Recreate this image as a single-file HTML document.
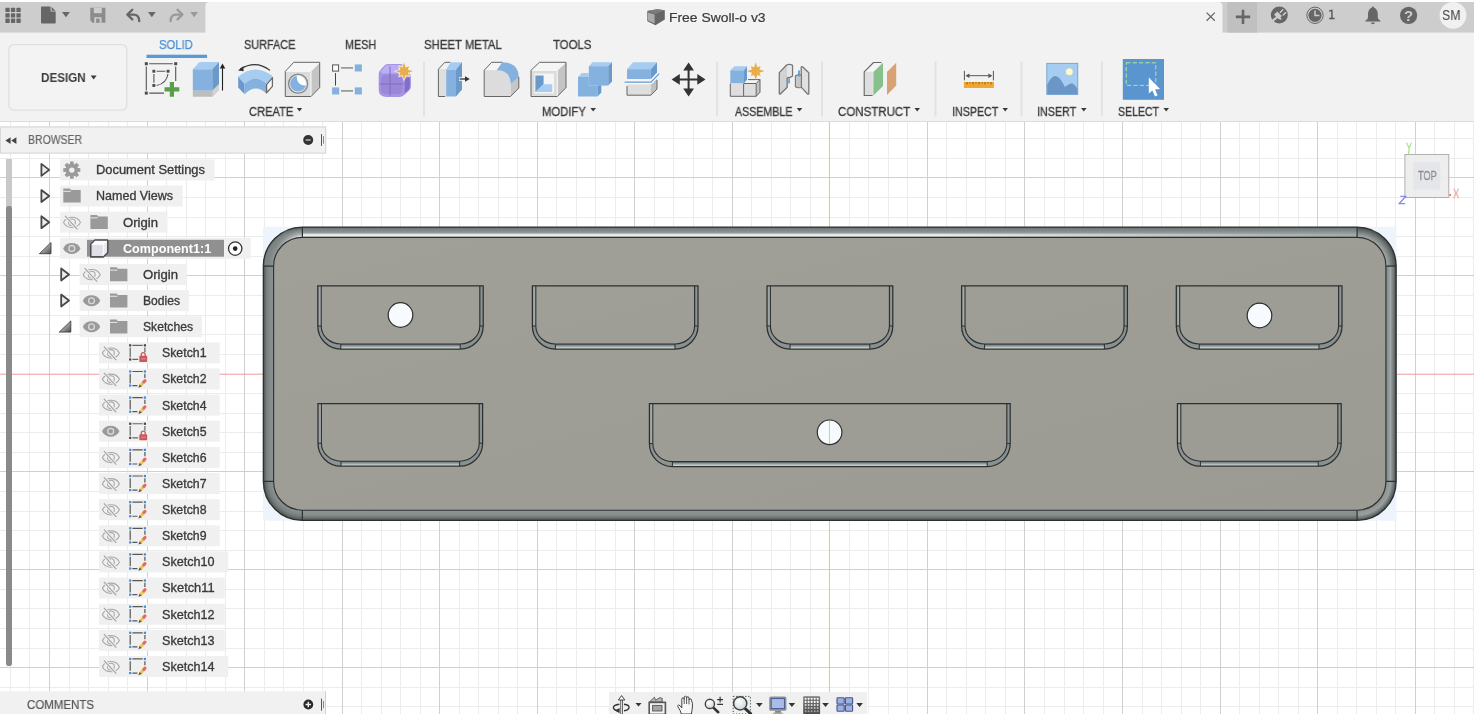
<!DOCTYPE html>
<html lang="en">
<head>
<meta charset="utf-8">
<title>Free Swoll-o v3</title>
<style>
*{box-sizing:border-box;margin:0;padding:0}
html,body{width:1474px;height:714px;overflow:hidden;background:#fff}
body{position:relative;font-family:"Liberation Sans",sans-serif;font-size:12px;color:#3c3c3c}
.abs{position:absolute}
#canvas{position:absolute;left:0;top:0;width:1474px;height:714px}
#topbar{position:absolute;left:0;top:2px;width:1474px;height:30px;background:#cdcdcd;z-index:2}
#activetab{position:absolute;left:205px;top:0;width:1018px;height:30px;background:#f2f2f2;border-radius:4px 4px 0 0}
#toolbar{z-index:1;position:absolute;left:0;top:32px;width:1474px;height:90px;background:#f2f2f2;border-bottom:1px solid #dcdcdc}
.t{position:absolute;white-space:nowrap;line-height:1;will-change:transform}
.tab{font-size:12px;color:#3c3c3c;top:7.2px;-webkit-text-stroke:.32px #3c3c3c}
.grp{font-size:12px;color:#3c3c3c;top:74.2px;-webkit-text-stroke:.32px #3c3c3c}
.sep{position:absolute;top:29.5px;width:2px;height:55px;background:#e2e2e2}
.ico{position:absolute;overflow:visible}
.row{position:absolute;background:#f0f0f0}
.tr{font-size:12px;color:#3a3a3a;-webkit-text-stroke:.32px #3a3a3a}
.lbl{position:absolute;font-size:12px;color:#3c3c3c;line-height:20px;top:0;white-space:nowrap}
</style>
</head>
<body>
<!-- CANVAS -->
<svg id="canvas" width="1474" height="714" viewBox="0 0 1474 714">
<path d="M10.5 122V714M29.5 122V714M69.5 122V714M88.5 122V714M108.5 122V714M127.5 122V714M166.5 122V714M186.5 122V714M205.5 122V714M225.5 122V714M264.5 122V714M283.5 122V714M303.5 122V714M322.5 122V714M361.5 122V714M381.5 122V714M400.5 122V714M420.5 122V714M459.5 122V714M478.5 122V714M498.5 122V714M517.5 122V714M556.5 122V714M576.5 122V714M595.5 122V714M615.5 122V714M654.5 122V714M673.5 122V714M693.5 122V714M712.5 122V714M751.5 122V714M771.5 122V714M790.5 122V714M810.5 122V714M849.5 122V714M868.5 122V714M888.5 122V714M907.5 122V714M946.5 122V714M966.5 122V714M985.5 122V714M1005.5 122V714M1044.5 122V714M1064.5 122V714M1083.5 122V714M1103.5 122V714M1142.5 122V714M1161.5 122V714M1181.5 122V714M1200.5 122V714M1239.5 122V714M1259.5 122V714M1278.5 122V714M1298.5 122V714M1337.5 122V714M1356.5 122V714M1376.5 122V714M1395.5 122V714M1434.5 122V714M1454.5 122V714M1473.5 122V714M0 138.5H1474M0 158.5H1474M0 197.5H1474M0 217.5H1474M0 236.5H1474M0 256.5H1474M0 295.5H1474M0 315.5H1474M0 334.5H1474M0 354.5H1474M0 393.5H1474M0 413.5H1474M0 432.5H1474M0 452.5H1474M0 491.5H1474M0 511.5H1474M0 530.5H1474M0 550.5H1474M0 589.5H1474M0 608.5H1474M0 628.5H1474M0 648.5H1474M0 687.5H1474M0 706.5H1474" stroke="#ececec" stroke-width="1" fill="none"/>
<path d="M49.5 122V714M147.5 122V714M244.5 122V714M342.5 122V714M439.5 122V714M537.5 122V714M634.5 122V714M732.5 122V714M927.5 122V714M1024.5 122V714M1122.5 122V714M1220.5 122V714M1317.5 122V714M1415.5 122V714M0 177.5H1474M0 275.5H1474M0 471.5H1474M0 569.5H1474M0 667.5H1474" stroke="#d0d0d0" stroke-width="1" fill="none"/>
<path d="M0 374.2H1474" stroke="#ee9a9a" stroke-width="1" fill="none"/>
<path d="M829.5 122V714" stroke="#a4ec80" stroke-width="1.1" fill="none"/>

<defs>
<linearGradient id="gTop" x1="0" y1="0" x2="0" y2="1"><stop offset="0" stop-color="#4a5050"/><stop offset="0.15" stop-color="#767e7e"/><stop offset="0.5" stop-color="#8a9292"/><stop offset="0.6" stop-color="#a0a8a8"/><stop offset="0.7" stop-color="#e2e6e8"/><stop offset="0.9" stop-color="#eef0f2"/><stop offset="1" stop-color="#8a9090"/></linearGradient>
<linearGradient id="gTopX" x1="0" y1="0" x2="1" y2="0"><stop offset="0" stop-color="#8a9292" stop-opacity="0"/><stop offset="0.6" stop-color="#8a9292" stop-opacity="0"/><stop offset="1" stop-color="#8a9292" stop-opacity=".75"/></linearGradient>
<linearGradient id="gBot" x1="0" y1="0" x2="0" y2="1"><stop offset="0" stop-color="#8e9492"/><stop offset="0.5" stop-color="#868c8a"/><stop offset="1" stop-color="#4e5454"/></linearGradient>
<linearGradient id="gLeft" x1="0" y1="0" x2="1" y2="0"><stop offset="0" stop-color="#555b5b"/><stop offset="0.4" stop-color="#7e8484"/><stop offset="1" stop-color="#8e9494"/></linearGradient>
<linearGradient id="gRight" x1="0" y1="0" x2="1" y2="0"><stop offset="0" stop-color="#7e8484"/><stop offset="0.45" stop-color="#a0a6a6"/><stop offset="1" stop-color="#4a5050"/></linearGradient>
<radialGradient id="gTL" gradientUnits="userSpaceOnUse" cx="302.4" cy="266.1" r="39.0"><stop offset="0.74" stop-color="#e0e4e4"/><stop offset="0.82" stop-color="#a8aeae"/><stop offset="0.92" stop-color="#7e8484"/><stop offset="1" stop-color="#555b5b"/></radialGradient>
<radialGradient id="gTR" gradientUnits="userSpaceOnUse" cx="1357.1" cy="266.1" r="39.0"><stop offset="0.74" stop-color="#a6acac"/><stop offset="0.86" stop-color="#7e8484"/><stop offset="1" stop-color="#464c4c"/></radialGradient>
<radialGradient id="gBL" gradientUnits="userSpaceOnUse" cx="302.4" cy="481.4" r="39.0"><stop offset="0.74" stop-color="#8e9494"/><stop offset="0.88" stop-color="#7a8080"/><stop offset="1" stop-color="#4e5454"/></radialGradient>
<radialGradient id="gBR" gradientUnits="userSpaceOnUse" cx="1357.1" cy="481.4" r="39.0"><stop offset="0.74" stop-color="#8a9090"/><stop offset="0.86" stop-color="#9aa0a0"/><stop offset="1" stop-color="#4a5050"/></radialGradient>
<linearGradient id="gTLo" gradientUnits="userSpaceOnUse" x1="263.4" y1="0" x2="302.4" y2="0"><stop offset="0" stop-color="#7c8282" stop-opacity=".9"/><stop offset="0.35" stop-color="#7c8282" stop-opacity=".75"/><stop offset="0.9" stop-color="#7c8282" stop-opacity="0"/></linearGradient>
<linearGradient id="gFace" x1="0" y1="0" x2="1" y2="1"><stop offset="0" stop-color="#a0a098"/><stop offset="1" stop-color="#9b9b93"/></linearGradient>
<linearGradient id="wL" x1="0" y1="0" x2="1" y2="0"><stop offset="0" stop-color="#8e9494"/><stop offset="1" stop-color="#b4baba"/></linearGradient>
<linearGradient id="wR" x1="0" y1="0" x2="1" y2="0"><stop offset="0" stop-color="#7e8484"/><stop offset="1" stop-color="#9aa0a0"/></linearGradient>
<linearGradient id="wB" x1="0" y1="0" x2="0" y2="1"><stop offset="0" stop-color="#5e6464"/><stop offset="0.4" stop-color="#929898"/><stop offset="0.75" stop-color="#c2caca"/><stop offset="1" stop-color="#d2dada"/></linearGradient>
</defs>
<rect x="263.0" y="226.79999999999998" width="1133.4999999999998" height="293.9" fill="#eef4fb"/>
<rect x="302.4" y="227.1" width="1054.6999999999998" height="10.2" fill="url(#gTop)"/>
<rect x="302.4" y="232.71" width="1054.6999999999998" height="4.59" fill="url(#gTopX)"/>
<rect x="302.4" y="510.2" width="1054.6999999999998" height="10.2" fill="url(#gBot)"/>
<rect x="263.4" y="266.1" width="10.2" height="215.29999999999995" fill="url(#gLeft)"/>
<rect x="1385.8999999999999" y="266.1" width="10.2" height="215.29999999999995" fill="url(#gRight)"/>
<path d="M263.4 266.1A39.0 39.0 0 0 1 302.4 227.10000000000002L302.4 237.3A28.8 28.8 0 0 0 273.59999999999997 266.1Z" fill="url(#gTL)"/>
<path d="M263.4 266.1A39.0 39.0 0 0 1 302.4 227.10000000000002L302.4 237.3A28.8 28.8 0 0 0 273.59999999999997 266.1Z" fill="url(#gTLo)"/>
<path d="M1396.1 266.1A39.0 39.0 0 0 0 1357.1 227.10000000000002L1357.1 237.3A28.8 28.8 0 0 1 1385.8999999999999 266.1Z" fill="url(#gTR)"/>
<path d="M263.4 481.4A39.0 39.0 0 0 0 302.4 520.4L302.4 510.2A28.8 28.8 0 0 1 273.59999999999997 481.4Z" fill="url(#gBL)"/>
<path d="M1396.1 481.4A39.0 39.0 0 0 1 1357.1 520.4L1357.1 510.2A28.8 28.8 0 0 0 1385.8999999999999 481.4Z" fill="url(#gBR)"/>
<rect x="273.59999999999997" y="237.29999999999998" width="1112.3" height="272.9" rx="28.8" ry="28.8" fill="url(#gFace)" stroke="#2b3030" stroke-width="1.15"/>
<rect x="263.4" y="227.1" width="1132.6999999999998" height="293.29999999999995" rx="39.0" ry="39.0" fill="none" stroke="#2b3030" stroke-width="1.4"/>
<path d="M302.4 227.1V237.29999999999998M302.4 510.2V520.4M1357.1 227.1V237.29999999999998M1357.1 510.2V520.4M263.4 266.1H273.59999999999997M1385.8999999999999 266.1H1396.1M263.4 481.4H273.59999999999997M1385.8999999999999 481.4H1396.1" stroke="#2b3030" stroke-width="1.2" fill="none"/>
<rect x="317.8" y="285.8" width="3.4" height="40.19999999999999" fill="url(#wL)"/>
<rect x="479.8" y="285.8" width="3.4" height="40.19999999999999" fill="url(#wR)"/>
<rect x="340.8" y="344.0" width="119.39999999999998" height="5.0" fill="url(#wB)"/>
<path d="M317.8 326.0A23.0 23.0 0 0 0 340.8 349.0V344.0A19.6 18.0 0 0 1 321.2 326.0Z" fill="#8e9494"/>
<path d="M483.2 326.0A23.0 23.0 0 0 1 460.2 349.0V344.0A19.6 18.0 0 0 0 479.8 326.0Z" fill="#8a9090"/>
<path d="M317.8 285.8H483.2V326.0A23.0 23.0 0 0 1 460.2 349.0H340.8A23.0 23.0 0 0 1 317.8 326.0Z" fill="none" stroke="#2b3030" stroke-width="1.25"/>
<path d="M321.2 285.8V326.0A19.6 18.0 0 0 0 340.8 344.0H460.2A19.6 18.0 0 0 0 479.8 326.0V285.8" fill="none" stroke="#2b3030" stroke-width="1.1"/>
<path d="M317.8 326.0H321.2M479.8 326.0H483.2M340.8 344.0V349.0M460.2 344.0V349.0" stroke="#2b3030" stroke-width="1" fill="none"/>
<rect x="532.4" y="285.8" width="3.4" height="40.19999999999999" fill="url(#wL)"/>
<rect x="694.6" y="285.8" width="3.4" height="40.19999999999999" fill="url(#wR)"/>
<rect x="555.4" y="344.0" width="119.60000000000002" height="5.0" fill="url(#wB)"/>
<path d="M532.4 326.0A23.0 23.0 0 0 0 555.4 349.0V344.0A19.6 18.0 0 0 1 535.8 326.0Z" fill="#8e9494"/>
<path d="M698.0 326.0A23.0 23.0 0 0 1 675.0 349.0V344.0A19.6 18.0 0 0 0 694.6 326.0Z" fill="#8a9090"/>
<path d="M532.4 285.8H698.0V326.0A23.0 23.0 0 0 1 675.0 349.0H555.4A23.0 23.0 0 0 1 532.4 326.0Z" fill="none" stroke="#2b3030" stroke-width="1.25"/>
<path d="M535.8 285.8V326.0A19.6 18.0 0 0 0 555.4 344.0H675.0A19.6 18.0 0 0 0 694.6 326.0V285.8" fill="none" stroke="#2b3030" stroke-width="1.1"/>
<path d="M532.4 326.0H535.8M694.6 326.0H698.0M555.4 344.0V349.0M675.0 344.0V349.0" stroke="#2b3030" stroke-width="1" fill="none"/>
<rect x="767.0" y="285.8" width="3.4" height="40.19999999999999" fill="url(#wL)"/>
<rect x="889.4" y="285.8" width="3.4" height="40.19999999999999" fill="url(#wR)"/>
<rect x="790.0" y="344.0" width="79.79999999999995" height="5.0" fill="url(#wB)"/>
<path d="M767.0 326.0A23.0 23.0 0 0 0 790.0 349.0V344.0A19.6 18.0 0 0 1 770.4 326.0Z" fill="#8e9494"/>
<path d="M892.8 326.0A23.0 23.0 0 0 1 869.8 349.0V344.0A19.6 18.0 0 0 0 889.4 326.0Z" fill="#8a9090"/>
<path d="M767.0 285.8H892.8V326.0A23.0 23.0 0 0 1 869.8 349.0H790.0A23.0 23.0 0 0 1 767.0 326.0Z" fill="none" stroke="#2b3030" stroke-width="1.25"/>
<path d="M770.4 285.8V326.0A19.6 18.0 0 0 0 790.0 344.0H869.8A19.6 18.0 0 0 0 889.4 326.0V285.8" fill="none" stroke="#2b3030" stroke-width="1.1"/>
<path d="M767.0 326.0H770.4M889.4 326.0H892.8M790.0 344.0V349.0M869.8 344.0V349.0" stroke="#2b3030" stroke-width="1" fill="none"/>
<rect x="961.6" y="285.8" width="3.4" height="40.19999999999999" fill="url(#wL)"/>
<rect x="1124.0" y="285.8" width="3.4" height="40.19999999999999" fill="url(#wR)"/>
<rect x="984.6" y="344.0" width="119.80000000000007" height="5.0" fill="url(#wB)"/>
<path d="M961.6 326.0A23.0 23.0 0 0 0 984.6 349.0V344.0A19.6 18.0 0 0 1 965.0 326.0Z" fill="#8e9494"/>
<path d="M1127.4 326.0A23.0 23.0 0 0 1 1104.4 349.0V344.0A19.6 18.0 0 0 0 1124.0 326.0Z" fill="#8a9090"/>
<path d="M961.6 285.8H1127.4V326.0A23.0 23.0 0 0 1 1104.4 349.0H984.6A23.0 23.0 0 0 1 961.6 326.0Z" fill="none" stroke="#2b3030" stroke-width="1.25"/>
<path d="M965.0 285.8V326.0A19.6 18.0 0 0 0 984.6 344.0H1104.4A19.6 18.0 0 0 0 1124.0 326.0V285.8" fill="none" stroke="#2b3030" stroke-width="1.1"/>
<path d="M961.6 326.0H965.0M1124.0 326.0H1127.4M984.6 344.0V349.0M1104.4 344.0V349.0" stroke="#2b3030" stroke-width="1" fill="none"/>
<rect x="1176.3" y="285.8" width="3.4" height="40.19999999999999" fill="url(#wL)"/>
<rect x="1338.6" y="285.8" width="3.4" height="40.19999999999999" fill="url(#wR)"/>
<rect x="1199.3" y="344.0" width="119.70000000000005" height="5.0" fill="url(#wB)"/>
<path d="M1176.3 326.0A23.0 23.0 0 0 0 1199.3 349.0V344.0A19.6 18.0 0 0 1 1179.7 326.0Z" fill="#8e9494"/>
<path d="M1342.0 326.0A23.0 23.0 0 0 1 1319.0 349.0V344.0A19.6 18.0 0 0 0 1338.6 326.0Z" fill="#8a9090"/>
<path d="M1176.3 285.8H1342.0V326.0A23.0 23.0 0 0 1 1319.0 349.0H1199.3A23.0 23.0 0 0 1 1176.3 326.0Z" fill="none" stroke="#2b3030" stroke-width="1.25"/>
<path d="M1179.7 285.8V326.0A19.6 18.0 0 0 0 1199.3 344.0H1319.0A19.6 18.0 0 0 0 1338.6 326.0V285.8" fill="none" stroke="#2b3030" stroke-width="1.1"/>
<path d="M1176.3 326.0H1179.7M1338.6 326.0H1342.0M1199.3 344.0V349.0M1319.0 344.0V349.0" stroke="#2b3030" stroke-width="1" fill="none"/>
<rect x="318.0" y="403.5" width="3.4" height="39.69999999999999" fill="url(#wL)"/>
<rect x="479.20000000000005" y="403.5" width="3.4" height="39.69999999999999" fill="url(#wR)"/>
<rect x="341.0" y="461.2" width="118.60000000000002" height="5.0" fill="url(#wB)"/>
<path d="M318.0 443.2A23.0 23.0 0 0 0 341.0 466.2V461.2A19.6 18.0 0 0 1 321.4 443.2Z" fill="#8e9494"/>
<path d="M482.6 443.2A23.0 23.0 0 0 1 459.6 466.2V461.2A19.6 18.0 0 0 0 479.20000000000005 443.2Z" fill="#8a9090"/>
<path d="M318.0 403.5H482.6V443.2A23.0 23.0 0 0 1 459.6 466.2H341.0A23.0 23.0 0 0 1 318.0 443.2Z" fill="none" stroke="#2b3030" stroke-width="1.25"/>
<path d="M321.4 403.5V443.2A19.6 18.0 0 0 0 341.0 461.2H459.6A19.6 18.0 0 0 0 479.20000000000005 443.2V403.5" fill="none" stroke="#2b3030" stroke-width="1.1"/>
<path d="M318.0 443.2H321.4M479.20000000000005 443.2H482.6M341.0 461.2V466.2M459.6 461.2V466.2" stroke="#2b3030" stroke-width="1" fill="none"/>
<rect x="649.4" y="403.5" width="3.4" height="40.10000000000002" fill="url(#wL)"/>
<rect x="1006.8000000000001" y="403.5" width="3.4" height="40.10000000000002" fill="url(#wR)"/>
<rect x="672.4" y="461.6" width="314.80000000000007" height="5.0" fill="url(#wB)"/>
<path d="M649.4 443.6A23.0 23.0 0 0 0 672.4 466.6V461.6A19.6 18.0 0 0 1 652.8 443.6Z" fill="#8e9494"/>
<path d="M1010.2 443.6A23.0 23.0 0 0 1 987.2 466.6V461.6A19.6 18.0 0 0 0 1006.8000000000001 443.6Z" fill="#8a9090"/>
<path d="M649.4 403.5H1010.2V443.6A23.0 23.0 0 0 1 987.2 466.6H672.4A23.0 23.0 0 0 1 649.4 443.6Z" fill="none" stroke="#2b3030" stroke-width="1.25"/>
<path d="M652.8 403.5V443.6A19.6 18.0 0 0 0 672.4 461.6H987.2A19.6 18.0 0 0 0 1006.8000000000001 443.6V403.5" fill="none" stroke="#2b3030" stroke-width="1.1"/>
<path d="M649.4 443.6H652.8M1006.8000000000001 443.6H1010.2M672.4 461.6V466.6M987.2 461.6V466.6" stroke="#2b3030" stroke-width="1" fill="none"/>
<rect x="1177.4" y="403.5" width="3.4" height="39.69999999999999" fill="url(#wL)"/>
<rect x="1337.8" y="403.5" width="3.4" height="39.69999999999999" fill="url(#wR)"/>
<rect x="1200.4" y="461.2" width="117.79999999999995" height="5.0" fill="url(#wB)"/>
<path d="M1177.4 443.2A23.0 23.0 0 0 0 1200.4 466.2V461.2A19.6 18.0 0 0 1 1180.8000000000002 443.2Z" fill="#8e9494"/>
<path d="M1341.2 443.2A23.0 23.0 0 0 1 1318.2 466.2V461.2A19.6 18.0 0 0 0 1337.8 443.2Z" fill="#8a9090"/>
<path d="M1177.4 403.5H1341.2V443.2A23.0 23.0 0 0 1 1318.2 466.2H1200.4A23.0 23.0 0 0 1 1177.4 443.2Z" fill="none" stroke="#2b3030" stroke-width="1.25"/>
<path d="M1180.8000000000002 403.5V443.2A19.6 18.0 0 0 0 1200.4 461.2H1318.2A19.6 18.0 0 0 0 1337.8 443.2V403.5" fill="none" stroke="#2b3030" stroke-width="1.1"/>
<path d="M1177.4 443.2H1180.8000000000002M1337.8 443.2H1341.2M1200.4 461.2V466.2M1318.2 461.2V466.2" stroke="#2b3030" stroke-width="1" fill="none"/>
<circle cx="400.5" cy="315.0" r="12.3" fill="#f8fbfe" stroke="#2b3030" stroke-width="1.2"/>
<circle cx="1259.5" cy="315.5" r="12.3" fill="#f8fbfe" stroke="#2b3030" stroke-width="1.2"/>
<circle cx="829.6" cy="432.3" r="12.3" fill="#f8fbfe" stroke="#2b3030" stroke-width="1.2"/>
<path d="M829.5 421V444" stroke="#a4ec80" stroke-width="1.1"/>

<g>
<rect x="1404.9" y="154.5" width="43.9" height="43" fill="#ededee" fill-opacity=".92" stroke="#a8a8a8" stroke-width=".9"/>
<rect x="1413.2" y="162.4" width="27" height="27" fill="#e3e4e9" fill-opacity=".9"/>
<path d="M1408.6 154.4V151.6" stroke="#9be07a" stroke-width="1" fill="none"/>
<circle cx="1450.2" cy="195" r=".9" fill="#e05050"/>
</g>

</svg>

<!-- TOP BAR -->
<div id="topbar">
<svg class="abs" style="left:0;top:-2px" width="1474" height="34" viewBox="0 0 1474 34">
<rect x="0" y="2" width="1474" height="30.6" fill="#cdcdcd"/><path d="M205.4 34V6Q205.4 2 209.4 2H1218.5Q1222.5 2 1222.5 6V34Z" fill="#f2f2f2"/><rect x="1227.3" y="2" width="29.7" height="30.6" fill="#c0c0c0"/>
<!-- app grid -->
<g fill="#666">
<rect x="5.4" y="7.8" width="4.3" height="4.3" rx=".6"/><rect x="10.9" y="7.8" width="4.3" height="4.3" rx=".6"/><rect x="16.4" y="7.8" width="4.3" height="4.3" rx=".6"/>
<rect x="5.4" y="13.2" width="4.3" height="4.3" rx=".6"/><rect x="10.9" y="13.2" width="4.3" height="4.3" rx=".6"/><rect x="16.4" y="13.2" width="4.3" height="4.3" rx=".6"/>
<rect x="5.4" y="18.6" width="4.3" height="4.3" rx=".6"/><rect x="10.9" y="18.6" width="4.3" height="4.3" rx=".6"/><rect x="16.4" y="18.6" width="4.3" height="4.3" rx=".6"/>
</g>
<!-- file -->
<path d="M42 6.6H50.6V11.6H55.7V22.6Q55.7 23.6 54.7 23.6H42Q41 23.6 41 22.6V7.6Q41 6.6 42 6.6ZM51.6 6.9L55.5 10.7H51.6Z" fill="#666"/>
<path d="M62 12.1H69.9L65.95 17.2Z" fill="#666"/>
<!-- save -->
<path d="M90.3 7.8H105.4V22.8H92.6L90.3 20.6Z" fill="#8c8c8c"/>
<rect x="93.8" y="7.8" width="8" height="5.4" fill="#cdcdcd"/><rect x="94.3" y="17.2" width="7.2" height="5.6" fill="#cdcdcd"/><rect x="96.2" y="18.6" width="3.4" height="4.2" fill="#8c8c8c"/>
<!-- undo -->
<path d="M132.3 9.8L127.4 14.6L132.3 19.4" fill="none" stroke="#666" stroke-width="2.3" stroke-linecap="round" stroke-linejoin="round"/>
<path d="M127.8 14.6H133.5Q139.2 14.6 139.2 21.2" fill="none" stroke="#666" stroke-width="2.3" stroke-linecap="round"/>
<path d="M148 12.1H155.7L151.85 17.2Z" fill="#666"/>
<!-- redo -->
<path d="M177.5 9.8L182.4 14.6L177.5 19.4" fill="none" stroke="#999" stroke-width="2.3" stroke-linecap="round" stroke-linejoin="round"/>
<path d="M182 14.6H176.3Q170.6 14.6 170.6 21.2" fill="none" stroke="#999" stroke-width="2.3" stroke-linecap="round"/>
<path d="M190.3 12.1H198L194.15 17.2Z" fill="#999"/>
<!-- doc icon -->
<path d="M647.3 11L657 9.3L664.8 10.3V19.6L655.5 25.3L647.3 21.2Z" fill="#666"/>
<path d="M647.3 11L657 9.3L664.8 10.3L655 13.9Z" fill="#7c7c7c"/>
<path d="M648 12.4L654.6 14.6V23.6L648 20.6Z" fill="#ababab"/>
<!-- close x -->
<path d="M1206.6 12.6L1214.8 20.8M1214.8 12.6L1206.6 20.8" stroke="#666" stroke-width="1.3" fill="none"/>
<!-- plus -->
<path d="M1243 9.8V24M1235.8 16.9H1250.2" stroke="#666" stroke-width="2.6" fill="none"/>
<!-- extensions/job status -->
<circle cx="1279.3" cy="15" r="8.5" fill="#666"/>
<g stroke="#cdcdcd" fill="none" stroke-linecap="round">
<path d="M1271.6 22.4Q1273.4 19.4 1276.2 18" stroke-width="2.2"/>
<path d="M1276.4 17L1279.6 13.8" stroke-width="6.4" stroke-linecap="butt"/>
<path d="M1275.2 13.6L1281 19.4" stroke-width="2" stroke-linecap="butt"/>
<path d="M1280.4 12.2L1282.8 9.8M1283.2 15L1285.6 12.6" stroke-width="1.5"/>
</g>
<!-- clock -->
<circle cx="1315" cy="15.3" r="8.2" fill="none" stroke="#666" stroke-width="1"/>
<circle cx="1315" cy="15.3" r="6.6" fill="#666"/>
<path d="M1315 10.6V15.6H1319.4" stroke="#cdcdcd" stroke-width="1.5" fill="none"/>
<!-- bell -->
<path d="M1372.9 6.4Q1374 6.4 1374 7.8Q1377.6 9 1377.8 14V17.6Q1378 19.4 1380.4 20.8V21.6H1365.4V20.8Q1367.8 19.4 1368 17.6V14Q1368.2 9 1371.8 7.8Q1371.8 6.4 1372.9 6.4Z" fill="#666"/>
<path d="M1370.8 22.6H1375Q1374.8 24.3 1372.9 24.3Q1371 24.3 1370.8 22.6Z" fill="#666"/>
<!-- help -->
<circle cx="1408.6" cy="15.3" r="8.6" fill="#666"/>
<!-- avatar -->
<circle cx="1453" cy="15.3" r="13.4" fill="#f0f0f0"/>
</svg>
<div class="t" id="doctitle" style="left:669.2px;top:9.3px;font-size:13px;color:#3a3a3a;-webkit-text-stroke:.2px #3a3a3a;transform:scaleX(1.0696);transform-origin:0 0">Free Swoll-o v3</div>
<div class="t" id="t_one" style="left:1327.6px;top:8.3px;font-size:11.6px;color:#555;-webkit-text-stroke:.3px #555;font-family:'DejaVu Sans',sans-serif">1</div>
<div class="t" style="left:1404.1px;top:6.3px;font-size:15px;font-weight:bold;color:#cdcdcd">?</div>
<div class="t" id="sm" style="left:1441.8px;top:7.1px;font-size:13.8px;color:#444;transform:scaleX(0.8936);transform-origin:0 0">SM</div>

</div>

<!-- TOOLBAR -->
<div id="toolbar">
<svg class="abs" style="left:0;top:0" width="1474" height="89" viewBox="0 32 1474 89">
<rect x="9" y="44.6" width="117.8" height="65.5" rx="5" fill="#f3f3f3" stroke="#e0e0e0" stroke-width="1.4"/>
<rect x="146.5" y="54.7" width="60.6" height="3.3" fill="#5b9bd5"/>
<g fill="#3a3a3a">
<path d="M90.6 75.6H96.6L93.6 79.4Z"/>
<path d="M296.8 107.9H302.2L299.5 111.4Z"/><path d="M590.4 107.9H596L593.2 111.4Z"/><path d="M796.8 107.9H802.3L799.5 111.4Z"/><path d="M914.5 107.9H920L917.2 111.4Z"/><path d="M1002.5 107.9H1008L1005.2 111.4Z"/><path d="M1081 107.9H1086.6L1083.8 111.4Z"/><path d="M1163.5 107.9H1169L1166.2 111.4Z"/>
</g>
<rect x="423.0" y="61.5" width="2" height="55" fill="#e2e2e2"/><rect x="716.1" y="61.5" width="2" height="55" fill="#e2e2e2"/><rect x="821.0" y="61.5" width="2" height="55" fill="#e2e2e2"/><rect x="934.5" y="61.5" width="2" height="55" fill="#e2e2e2"/><rect x="1020.5" y="61.5" width="2" height="55" fill="#e2e2e2"/><rect x="1100.9" y="61.5" width="2" height="55" fill="#e2e2e2"/>
<!-- 1 sketch -->
<g fill="#4a4a4a">
<rect x="144.8" y="62.2" width="3" height="3"/><rect x="174.2" y="62.2" width="3" height="3"/><rect x="144.8" y="91.6" width="3" height="3"/>
<rect x="152.4" y="69.8" width="2.9" height="2.9"/><rect x="166.6" y="69.8" width="2.9" height="2.9"/><rect x="152.4" y="84" width="2.9" height="2.9"/>
</g>
<path d="M149.2 63.7H172.8M146.3 66.5V90.4M175.7 66.5V81M149.2 93.1H164" stroke="#555" stroke-width="1.1" fill="none"/>
<path d="M156.6 71.3H165.4M153.9 74V82.8" stroke="#555" stroke-width="1.1" fill="none"/>
<path d="M168 74Q166.5 83.5 156.6 85.5" stroke="#555" stroke-width="1.1" fill="none"/>
<path d="M171.9 82V96.7M164.5 89.35H179.3" stroke="#5a9e4b" stroke-width="4.2" fill="none"/>
<!-- 2 extrude -->
<path d="M192.8 90.6H212.3L219 84V90L212.3 96.7H192.8Z" fill="#bdbdbd"/>
<path d="M212.3 90.6L219 84V90L212.3 96.7Z" fill="#d2d2d2"/>
<rect x="192.8" y="69.2" width="19.5" height="21.4" fill="#85b1de"/>
<path d="M192.8 69.2L199.5 62H219L212.3 69.2Z" fill="#a6ccf2"/>
<path d="M212.3 69.2L219 62V84L212.3 90.6Z" fill="#6a9acb"/>
<path d="M222.5 66V90.6" stroke="#222" stroke-width="1.1"/><path d="M222.5 63.4L225.3 68.4H219.7Z" fill="#222"/>
<!-- 3 revolve -->
<path d="M238.2 76.8Q255 62.5 272.6 76L266.6 84Q255.5 73 244.6 84Z" fill="#a6ccf2"/>
<path d="M238.2 76.8L244.6 84V94.2L238.2 87.6Z" fill="#6a9acb"/>
<path d="M244.6 84Q255.5 73 266.6 84V93.8Q255.5 83 244.6 94.2Z" fill="#85b1de"/>
<path d="M266.6 84.6L272.4 77.6V86.4L266.6 92.8Z" fill="#fff" stroke="#6a6a6a" stroke-width="1.3" stroke-linejoin="round"/>
<path d="M270 70.4Q256 59.5 240.2 69" stroke="#333" stroke-width="1.1" fill="none"/><path d="M238 70.6L243.4 66.2L243.6 71.2Z" fill="#333"/>
<!-- 4 hole -->
<path d="M285.3 71.3L293.8 62.3H319.7L311 71.3Z" fill="#f5f5f5"/>
<path d="M311 71.3L319.7 62.3V87.6L311 96.5Z" fill="#c4c4c4"/>
<rect x="285.3" y="71.3" width="25.7" height="25.2" fill="#dcdcdc"/>
<path d="M285.3 71.3H311V96.5M311 71.3L319.7 62.3" fill="none" stroke="#f8f8f8" stroke-width="1"/><path d="M285.3 71.3L293.8 62.3H319.7V87.6L311 96.5H285.3Z" fill="none" stroke="#666" stroke-width="1" stroke-linejoin="round"/>
<circle cx="298.1" cy="83.7" r="9.5" fill="#e6e6e6" stroke="#868686" stroke-width="1.3"/>
<circle cx="298.1" cy="83.7" r="7.9" fill="#85b1de"/>
<clipPath id="hc"><circle cx="298.1" cy="83.7" r="7.9"/></clipPath><circle cx="304.8" cy="77.6" r="8" fill="#fff" clip-path="url(#hc)"/>
<!-- 5 pattern -->
<path d="M341 67.9H353M341 90.9H353" stroke="#999" stroke-width="1.6"/>
<path d="M335.5 73V85.6" stroke="#444" stroke-width="1"/>
<rect x="332.6" y="64.9" width="6" height="6.2" fill="#fafafa" stroke="#555" stroke-width="1"/>
<rect x="354.8" y="64.4" width="7.1" height="7.1" fill="#85b1de"/><rect x="332.1" y="87.4" width="7.1" height="7.1" fill="#85b1de"/><rect x="354.8" y="87.4" width="7.1" height="7.1" fill="#85b1de"/>
<!-- 6 form -->
<path d="M387.4 64H400Q404 64 406 66.6L409.4 72.6Q410.9 75.6 410.9 78.6V86.4Q410.9 88.6 409.2 90.4L404.2 95Q402.2 96.9 399 96.9H386Q378.7 96.9 378.7 89.6V74.6Q378.7 71.6 380.8 69.6L384.4 65.6Q385.8 64 387.4 64Z" fill="#a595e2"/>
<path d="M387.6 65H399.6Q403.4 65 405 67.4L407 72.4Q404 73.4 400 73.4H384Q381.6 73.4 380.4 72L384.8 66.6Q386 65 387.6 65Z" fill="#bcaef2"/>
<path d="M404.6 79.4L409.8 75.6V86.6Q409.8 88.2 408.6 89.6L404.6 93.2Z" fill="#826ec6"/>
<rect x="380.9" y="74.5" width="21.4" height="19.6" rx="4.6" fill="#9a87d8"/>
<path d="M390 66.4V95.6M379.6 84H403.4" stroke="#7f6cc4" stroke-width="1" fill="none"/>
<path d="M404.10 61.10L406.17 66.31L410.04 65.36L409.09 69.23L414.30 71.30L409.09 73.37L410.04 77.24L406.17 76.29L404.10 81.50L402.03 76.29L398.16 77.24L399.11 73.37L393.90 71.30L399.11 69.23L398.16 65.36L402.03 66.31Z" fill="#f4f1ea"/>
<path d="M404.10 62.50L405.67 67.51L409.05 66.35L407.89 69.73L412.90 71.30L407.89 72.87L409.05 76.25L405.67 75.09L404.10 80.10L402.53 75.09L399.15 76.25L400.31 72.87L395.30 71.30L400.31 69.73L399.15 66.35L402.53 67.51Z" fill="#e8ae4c"/>
<!-- 7 press pull -->
<path d="M438.4 69.2L444.8 62.3H450.4L446.2 69.2Z" fill="#f2f2f2"/>
<rect x="438.4" y="69.2" width="7.8" height="27.3" fill="#dedede"/>
<path d="M450.4 62.3H444.8L438.4 69.2V96.5H445.2" fill="none" stroke="#666" stroke-width="1"/>
<rect x="446.2" y="69.4" width="9.8" height="27.1" fill="#85b1de"/>
<path d="M446.2 69.4L450.6 62.3H462L456 69.4Z" fill="#a6ccf2"/>
<path d="M456 69.4L462 62.3V89.6L456 96.5Z" fill="#6a9acb"/>
<path d="M459 79H468" stroke="#f2f2f2" stroke-width="3.6"/><path d="M459.6 79H466" stroke="#333" stroke-width="1.3"/><path d="M469.8 79L465 76.2V81.8Z" fill="#333"/>
<!-- 8 fillet -->
<path d="M484.2 70.3L491.7 62.3H502.3L497 70.3Z" fill="#f5f5f5"/>
<path d="M510.5 84L518.8 77V88L510.5 96.5Z" fill="#c6c6c6"/>
<path d="M484.2 70.3H497Q510.5 70.3 510.5 84V96.5H484.2Z" fill="#dcdcdc"/>
<path d="M502.3 62.3Q518.8 62.6 518.8 77L510.6 84Q510.5 70.3 496.6 70.3Z" fill="#85b1de"/>
<path d="M502.3 62.3H491.7L484.2 70.3V96.5H510.5L518.8 88V77" fill="none" stroke="#666" stroke-width="1" stroke-linejoin="round"/>
<!-- 9 shell -->
<path d="M531 70.3L539.5 62.3H566L557.3 70.3Z" fill="#f5f5f5"/>
<path d="M557.3 70.3L566 62.3V87.6L557.3 96.5Z" fill="#c4c4c4"/>
<rect x="531" y="70.3" width="26.3" height="26.2" fill="#dcdcdc"/>
<rect x="534.4" y="73.6" width="19.6" height="19.8" fill="#f5f5f5"/>
<path d="M535.4 75.4H543.6V84.3L535.4 92Z" fill="#6a9acb"/>
<path d="M543.6 84.3H552.2V92H535.4Z" fill="#a6ccf2"/>
<path d="M531 70.3H557.3V96.5M557.3 70.3L566 62.3" fill="none" stroke="#f8f8f8" stroke-width="1"/><path d="M531 70.3L539.5 62.3H566V87.6L557.3 96.5H531Z" fill="none" stroke="#666" stroke-width="1" stroke-linejoin="round"/>
<!-- 10 combine -->
<path d="M588.8 66.2L592.6 62.3H612L608.2 66.2Z" fill="#a6ccf2"/><path d="M608.2 66.2L612 62.3V81.6L608.2 85.5Z" fill="#6a9acb"/><rect x="588.8" y="66.2" width="19.4" height="19.4" fill="#85b1de"/>
<path d="M578 76.9L581.8 73H588.8V76.9Z" fill="#a6ccf2"/>
<path d="M578 76.9H588.8V85.5H597.5V96.5H578Z" fill="#85b1de"/>
<path d="M597.5 85.5H601.3V92.6L597.5 96.5Z" fill="#6a9acb"/>
<!-- 11 split -->
<path d="M627 69.2L633 62.3H657L650.9 69.2Z" fill="#a6ccf2"/><path d="M650.9 69.2L657 62.3V72.6L650.9 79Z" fill="#6a9acb"/><rect x="627" y="69.2" width="23.9" height="9.8" fill="#85b1de"/>
<rect x="627" y="84.6" width="23.9" height="10.6" fill="#dedede"/><path d="M650.9 84.6L657 78.6V89L650.9 95.2Z" fill="#c0c0c0"/>
<path d="M627 86V95.2H650.9L657 89V80" fill="none" stroke="#666" stroke-width="1"/>
<path d="M624.6 82.2H651L659.2 73.6" fill="none" stroke="#fafafa" stroke-width="3.6"/>
<path d="M624.6 82.2H651L659.2 73.6" fill="none" stroke="#5b9bd5" stroke-width="1.3"/>
<!-- 12 move -->
<path d="M688.6 68V91M677 79.4H700" stroke="#333" stroke-width="2" fill="none"/>
<path d="M688.6 62.4L694 70.6H683.2ZM688.6 96.6L694 88.4H683.2ZM671.6 79.4L679.8 74V84.8ZM705.5 79.4L697.3 74V84.8Z" fill="#333"/>
<!-- 13 new component -->
<path d="M730.3 70.3L734.5 66.3H747L744 70.3Z" fill="#a6ccf2"/><path d="M744 70.3L747 66.3V79.4L744 83.5Z" fill="#6a9acb"/><rect x="730.3" y="70.3" width="13.7" height="13.2" fill="#85b1de"/>
<path d="M744 83.5L748 79.6H760L756.2 83.5Z" fill="#f5f5f5"/><path d="M756.2 83.5L760 79.6V92.2L756.2 96.3Z" fill="#c4c4c4"/>
<rect x="730.3" y="83.5" width="25.9" height="12.8" fill="#dedede"/>
<path d="M730.3 83.5V96.3H756.2L760 92.2V79.6H748M743.6 83.5V96.3M744 83.5H756.2V96.3M756.2 83.5L760 79.6" fill="none" stroke="#666" stroke-width="1" stroke-linejoin="round"/>
<path d="M755.70 62.30L757.27 67.31L760.65 66.15L759.49 69.53L764.50 71.10L759.49 72.67L760.65 76.05L757.27 74.89L755.70 79.90L754.13 74.89L750.75 76.05L751.91 72.67L746.90 71.10L751.91 69.53L750.75 66.15L754.13 67.31Z" fill="#e8ae4c"/>
<!-- 14 joint -->
<path d="M779.3 72.6L786.6 65Q789.6 63.4 792.5 65.4V76Q790 78 787.2 77.8V87.2L780.4 94Q779.3 94.4 779.3 93.4Z" fill="#d2d2d2" stroke="#777" stroke-width="1.3" stroke-linejoin="round"/>
<path d="M787 66Q789.6 64.6 791.8 66V75.6Q789.6 77 787 76.4Z" fill="#e6e6e6"/>
<path d="M801.2 67.4Q801.8 66.2 802.8 67L808.8 72.8V93.6Q808.4 94.8 807.4 93.8L801.4 87.4Z" fill="#e0e0e0" stroke="#777" stroke-width="1.3" stroke-linejoin="round"/>
<path d="M795.4 76Q798.4 73.6 801.4 75.4V87.2Q798.4 88.6 795.4 86.8Z" fill="#c8c8c8" stroke="#777" stroke-width="1.1" stroke-linejoin="round"/>
<path d="M789.1 78.3V83.6" stroke="#5b9bd5" stroke-width="1.6"/><path d="M799 70.6V76.6" stroke="#5b9bd5" stroke-width="1.8"/>
<!-- 15 construct -->
<path d="M864.2 71.8L873.6 62.5H881.4L872.3 71.8Z" fill="#f5f5f5"/>
<rect x="864.2" y="71.8" width="8.6" height="23.7" fill="#dedede"/>
<path d="M881.4 62.5H873.6L864.2 71.8V95.5H872.6" fill="none" stroke="#666" stroke-width="1.1" stroke-linejoin="round"/>
<path d="M873.4 72L883 62.8V86L873.4 95.5Z" fill="#86c08a"/>
<path d="M887 72L896.2 62.8V85.6L887 95Z" fill="#d8a273"/>
<!-- 16 inspect -->
<rect x="963.9" y="82" width="30" height="6" fill="#f0a830"/>
<path d="M967 82V84.4M970 82V83.4M973 82V84.4M976 82V83.4M979 82V84.4M982 82V83.4M985 82V84.4M988 82V83.4M991 82V84.4" stroke="#7a5a20" stroke-width=".9"/>
<path d="M964.4 70.8V80.4M993.4 70.8V80.4M967 75.7H991" stroke="#555" stroke-width="1" fill="none"/>
<path d="M965.4 75.7L969.4 73.4V78ZM992.4 75.7L988.4 73.4V78Z" fill="#555"/>
<!-- 17 insert -->
<rect x="1046.8" y="63.3" width="31" height="31.2" fill="#a6ccf2" stroke="#6a9acb" stroke-width=".8"/>
<path d="M1047.2 85Q1051 76 1055.5 76Q1059.5 76 1065 87Q1069 83.5 1071.5 83.5Q1074.5 83.5 1077.4 89V94.1H1047.2Z" fill="#6a96c8"/>
<circle cx="1069.3" cy="71.8" r="3.5" fill="#fdf8c8"/>
<!-- 18 select -->
<rect x="1122.8" y="59" width="41.2" height="40.8" fill="#5b95cf"/>
<rect x="1126.2" y="62.8" width="29.6" height="22.6" fill="none" stroke="#b6e88e" stroke-width="1" stroke-dasharray="4.2 2.2"/>
<path d="M1148.8 77.6V93.4L1152.4 90.4L1155 96.4L1157.6 95.2L1155 89.4L1160 89Z" fill="#fff"/>

</svg>



<div class="t tab" id="t_solid" style="left:159px;color:#4a90d0;-webkit-text-stroke:.25px #4a90d0;transform:scaleX(0.9385);transform-origin:0 0">SOLID</div>
<div class="t tab" id="t_surface" style="left:243.6px;transform:scaleX(0.9067);transform-origin:0 0">SURFACE</div>
<div class="t tab" id="t_mesh" style="left:345.3px;transform:scaleX(0.8999);transform-origin:0 0">MESH</div>
<div class="t tab" id="t_sheet" style="left:424px;transform:scaleX(0.9459);transform-origin:0 0">SHEET METAL</div>
<div class="t tab" id="t_tools" style="left:552.6px;transform:scaleX(0.9489);transform-origin:0 0">TOOLS</div>
<div class="t" id="t_design" style="left:40.7px;top:39.5px;font-size:12px;font-weight:bold;color:#3c3c3c;transform:scaleX(0.9714);transform-origin:0 0">DESIGN</div>
<div class="t grp" id="t_create" style="left:248.6px;transform:scaleX(0.9289);transform-origin:0 0">CREATE</div>
<div class="t grp" id="t_modify" style="left:541.5px;transform:scaleX(0.9385);transform-origin:0 0">MODIFY</div>
<div class="t grp" id="t_assemble" style="left:735.4px;transform:scaleX(0.8871);transform-origin:0 0">ASSEMBLE</div>
<div class="t grp" id="t_construct" style="left:838.3px;transform:scaleX(0.9585);transform-origin:0 0">CONSTRUCT</div>
<div class="t grp" id="t_inspect" style="left:951.7px;transform:scaleX(0.8901);transform-origin:0 0">INSPECT</div>
<div class="t grp" id="t_insert" style="left:1037.2px;transform:scaleX(0.8950);transform-origin:0 0">INSERT</div>
<div class="t grp" id="t_select" style="left:1118.1px;transform:scaleX(0.8782);transform-origin:0 0">SELECT</div>

</div>

<!-- BROWSER -->
<svg class="abs" style="left:0;top:0" width="340" height="714" viewBox="0 0 340 714"><rect x="0.4" y="126.9" width="325.3" height="26.2" fill="#f1f1f1" stroke="#d8d8d8" stroke-width="1.2"/><rect x="0" y="691.2" width="326" height="26" fill="#f1f1f1"/><path d="M325.5 691.2V714" stroke="#cfcfcf" stroke-width="1"/><rect x="60.1" y="159.40" width="154.5" height="21.0" fill="#f0f0f0"/><rect x="60.1" y="185.53" width="122.5" height="21.0" fill="#f0f0f0"/><rect x="60.1" y="211.67" width="107.4" height="21.0" fill="#f0f0f0"/><rect x="60.1" y="237.81" width="190.7" height="21.0" fill="#f0f0f0"/><rect x="87" y="239.81" width="137" height="16.9" fill="#909090"/><rect x="79.6" y="263.94" width="107.3" height="21.0" fill="#f0f0f0"/><rect x="79.6" y="290.08" width="109.3" height="21.0" fill="#f0f0f0"/><rect x="79.6" y="316.21" width="122.3" height="21.0" fill="#f0f0f0"/><rect x="99.0" y="342.35" width="120.7" height="21.0" fill="#f0f0f0"/><rect x="99.0" y="368.48" width="120.7" height="21.0" fill="#f0f0f0"/><rect x="99.0" y="394.62" width="120.7" height="21.0" fill="#f0f0f0"/><rect x="99.0" y="420.75" width="120.7" height="21.0" fill="#f0f0f0"/><rect x="99.0" y="446.88" width="120.7" height="21.0" fill="#f0f0f0"/><rect x="99.0" y="473.02" width="120.7" height="21.0" fill="#f0f0f0"/><rect x="99.0" y="499.15" width="120.7" height="21.0" fill="#f0f0f0"/><rect x="99.0" y="525.29" width="120.7" height="21.0" fill="#f0f0f0"/><rect x="99.0" y="551.43" width="129.3" height="21.0" fill="#f0f0f0"/><rect x="99.0" y="577.56" width="125.7" height="21.0" fill="#f0f0f0"/><rect x="99.0" y="603.70" width="125.7" height="21.0" fill="#f0f0f0"/><rect x="99.0" y="629.83" width="125.7" height="21.0" fill="#f0f0f0"/><rect x="99.0" y="655.97" width="129.3" height="21.0" fill="#f0f0f0"/></svg>

<div class="t" id="t_browser" style="left:27.5px;top:133.6px;font-size:12px;color:#666;-webkit-text-stroke:.2px #666;transform:scaleX(0.8740);transform-origin:0 0">BROWSER</div>

<div class="t" id="t_comments" style="left:27.3px;top:698.6px;font-size:12px;color:#555;-webkit-text-stroke:.2px #555;transform:scaleX(0.9571);transform-origin:0 0">COMMENTS</div>
<div class="abs" style="left:6.1px;top:158.8px;width:5.6px;height:50px;background:#c9c9c9"></div>
<div class="abs" style="left:6.1px;top:205.6px;width:5.7px;height:460px;background:#8a8a8a;border-radius:2.8px"></div>
<div class="t tr" id="tr0" style="left:96.4px;top:164.30px;transform:scaleX(1.0751);transform-origin:0 0">Document Settings</div>
<div class="t tr" id="tr1" style="left:96.4px;top:190.44px;transform:scaleX(1.0432);transform-origin:0 0">Named Views</div>
<div class="t tr" id="tr2" style="left:123.3px;top:216.57px;transform:scaleX(1.0932);transform-origin:0 0">Origin</div>
<div class="t tr" id="tr3" style="left:123.3px;top:242.71px;color:#fff;font-weight:bold;-webkit-text-stroke:0;transform:scaleX(1.0500);transform-origin:0 0">Component1:1</div>
<div class="t tr" id="tr4" style="left:142.7px;top:268.84px;transform:scaleX(1.0932);transform-origin:0 0">Origin</div>
<div class="t tr" id="tr5" style="left:142.7px;top:294.98px;transform:scaleX(1.0081);transform-origin:0 0">Bodies</div>
<div class="t tr" id="tr6" style="left:142.7px;top:321.11px;transform:scaleX(1.0130);transform-origin:0 0">Sketches</div>
<div class="t tr" id="tr7" style="left:162.1px;top:347.25px;transform:scaleX(1.0263);transform-origin:0 0">Sketch1</div>
<div class="t tr" id="tr8" style="left:162.1px;top:373.38px;transform:scaleX(1.0263);transform-origin:0 0">Sketch2</div>
<div class="t tr" id="tr9" style="left:162.1px;top:399.51px;transform:scaleX(1.0263);transform-origin:0 0">Sketch4</div>
<div class="t tr" id="tr10" style="left:162.1px;top:425.65px;transform:scaleX(1.0263);transform-origin:0 0">Sketch5</div>
<div class="t tr" id="tr11" style="left:162.1px;top:451.78px;transform:scaleX(1.0263);transform-origin:0 0">Sketch6</div>
<div class="t tr" id="tr12" style="left:162.1px;top:477.92px;transform:scaleX(1.0263);transform-origin:0 0">Sketch7</div>
<div class="t tr" id="tr13" style="left:162.1px;top:504.05px;transform:scaleX(1.0263);transform-origin:0 0">Sketch8</div>
<div class="t tr" id="tr14" style="left:162.1px;top:530.19px;transform:scaleX(1.0263);transform-origin:0 0">Sketch9</div>
<div class="t tr" id="tr15" style="left:162.1px;top:556.33px;transform:scaleX(1.0510);transform-origin:0 0">Sketch10</div>
<div class="t tr" id="tr16" style="left:162.1px;top:582.46px;transform:scaleX(1.0701);transform-origin:0 0">Sketch11</div>
<div class="t tr" id="tr17" style="left:162.1px;top:608.60px;transform:scaleX(1.0510);transform-origin:0 0">Sketch12</div>
<div class="t tr" id="tr18" style="left:162.1px;top:634.73px;transform:scaleX(1.0510);transform-origin:0 0">Sketch13</div>
<div class="t tr" id="tr19" style="left:162.1px;top:660.87px;transform:scaleX(1.0510);transform-origin:0 0">Sketch14</div>
<svg class="abs" style="left:0;top:0;pointer-events:none" width="340" height="714" viewBox="0 0 340 714">
<defs><linearGradient id="gArr" x1="0" y1="0" x2="1" y2="1"><stop offset="0.3" stop-color="#c8c8c8"/><stop offset="1" stop-color="#4a4a4a"/></linearGradient></defs>
<path d="M41.4 163.9L49.2 169.9L41.4 175.9Z" fill="#ececec" stroke="#484848" stroke-width="1.8" stroke-linejoin="round"/>
<path d="M70.07 161.57L73.53 161.57L73.78 164.12L74.63 164.47L76.61 162.85L79.05 165.29L77.43 167.27L77.78 168.12L80.33 168.37L80.33 171.83L77.78 172.08L77.43 172.93L79.05 174.91L76.61 177.35L74.63 175.73L73.78 176.08L73.53 178.63L70.07 178.63L69.82 176.08L68.97 175.73L66.99 177.35L64.55 174.91L66.17 172.93L65.82 172.08L63.27 171.83L63.27 168.37L65.82 168.12L66.17 167.27L64.55 165.29L66.99 162.85L68.97 164.47L69.82 164.12Z" fill="#9a9a9a"/><circle cx="71.8" cy="170.1" r="2.7" fill="#f0f0f0"/>
<path d="M41.4 190.035L49.2 196.035L41.4 202.035Z" fill="#ececec" stroke="#484848" stroke-width="1.8" stroke-linejoin="round"/>
<path d="M63.3 188.435H69.89999999999999L71.1 190.035H80.69999999999999V202.435H63.3Z" fill="#9a9a9a"/><path d="M63.3 191.335H70.7" stroke="#f0f0f0" stroke-width=".9"/>
<path d="M41.4 216.17000000000002L49.2 222.17000000000002L41.4 228.17000000000002Z" fill="#ececec" stroke="#484848" stroke-width="1.8" stroke-linejoin="round"/>
<path d="M63.5 222.37C66.8 215.57 77.2 215.57 80.5 222.37C77.2 229.17000000000002 66.8 229.17000000000002 63.5 222.37Z" fill="none" stroke="#a8a8a8" stroke-width="1.1"/><circle cx="72.0" cy="222.37" r="3.4" fill="none" stroke="#a8a8a8" stroke-width="1.1"/><path d="M65.4 216.37L77.0 228.97" stroke="#f0f0f0" stroke-width="3"/><path d="M65.0 215.97L77.4 229.37" stroke="#a0a0a0" stroke-width="1.1"/>
<path d="M90.39999999999999 214.97000000000003H96.99999999999999L98.19999999999999 216.57000000000002H107.79999999999998V228.97000000000003H90.39999999999999Z" fill="#9a9a9a"/><path d="M90.39999999999999 217.87000000000003H97.8" stroke="#f0f0f0" stroke-width=".9"/>
<path d="M51.0 242.505V253.705H39.4Z" fill="url(#gArr)" stroke="#333" stroke-width=".8" stroke-linejoin="round"/>
<path d="M63.099999999999994 248.405C66.39999999999999 241.105 77.2 241.105 80.5 248.405C77.2 255.705 66.39999999999999 255.705 63.099999999999994 248.405Z" fill="#9a9a9a"/><circle cx="71.8" cy="248.405" r="2.9" fill="none" stroke="#dadada" stroke-width="1.3"/>
<path d="M90.7 244.30499999999998L94.9 240.105H107.7V252.505L103.3 256.905H90.7Z" fill="#dfe0e7" stroke="#4a4a4a" stroke-width="1.2" stroke-linejoin="round"/><path d="M103.3 244.30499999999998L107.7 240.105V252.505L103.3 256.905Z" fill="#e9e9f1"/><path d="M90.7 244.30499999999998L94.9 240.105H107.7L103.3 244.30499999999998Z" fill="#fbfbff"/><path d="M90.7 244.30499999999998H103.3V256.905M103.3 244.30499999999998L107.7 240.105" fill="none" stroke="#fff" stroke-width=".9"/><path d="M90.7 244.30499999999998L94.9 240.105H107.7V252.505L103.3 256.905H90.7Z" fill="none" stroke="#4a4a4a" stroke-width="1.2" stroke-linejoin="round"/>
<circle cx="235.2" cy="248.61" r="6.7" fill="#fff" stroke="#333" stroke-width="1.3"/><circle cx="235.2" cy="248.61" r="2.3" fill="#222"/>
<path d="M61.2 268.44L69.0 274.44L61.2 280.44Z" fill="#ececec" stroke="#484848" stroke-width="1.8" stroke-linejoin="round"/>
<path d="M83.2 274.64C86.5 267.84 96.9 267.84 100.2 274.64C96.9 281.44 86.5 281.44 83.2 274.64Z" fill="none" stroke="#a8a8a8" stroke-width="1.1"/><circle cx="91.7" cy="274.64" r="3.4" fill="none" stroke="#a8a8a8" stroke-width="1.1"/><path d="M85.10000000000001 268.64L96.7 281.24" stroke="#f0f0f0" stroke-width="3"/><path d="M84.7 268.24L97.10000000000001 281.64" stroke="#a0a0a0" stroke-width="1.1"/>
<path d="M110.0 267.24H116.6L117.8 268.84000000000003H127.4V281.24H110.0Z" fill="#9a9a9a"/><path d="M110.0 270.14H117.4" stroke="#f0f0f0" stroke-width=".9"/>
<path d="M61.2 294.57500000000005L69.0 300.57500000000005L61.2 306.57500000000005Z" fill="#ececec" stroke="#484848" stroke-width="1.8" stroke-linejoin="round"/>
<path d="M82.8 300.67500000000007C86.1 293.37500000000006 96.9 293.37500000000006 100.2 300.67500000000007C96.9 307.9750000000001 86.1 307.9750000000001 82.8 300.67500000000007Z" fill="#9a9a9a"/><circle cx="91.5" cy="300.67500000000007" r="2.9" fill="none" stroke="#dadada" stroke-width="1.3"/>
<path d="M110.0 293.37500000000006H116.6L117.8 294.9750000000001H127.4V307.37500000000006H110.0Z" fill="#9a9a9a"/><path d="M110.0 296.27500000000003H117.4" stroke="#f0f0f0" stroke-width=".9"/>
<path d="M70.8 320.91V332.11H59.2Z" fill="url(#gArr)" stroke="#333" stroke-width=".8" stroke-linejoin="round"/>
<path d="M82.8 326.81000000000006C86.1 319.51000000000005 96.9 319.51000000000005 100.2 326.81000000000006C96.9 334.11000000000007 86.1 334.11000000000007 82.8 326.81000000000006Z" fill="#9a9a9a"/><circle cx="91.5" cy="326.81000000000006" r="2.9" fill="none" stroke="#dadada" stroke-width="1.3"/>
<path d="M110.0 319.51000000000005H116.6L117.8 321.11000000000007H127.4V333.51000000000005H110.0Z" fill="#9a9a9a"/><path d="M110.0 322.41H117.4" stroke="#f0f0f0" stroke-width=".9"/>
<path d="M102.4 353.045C105.7 346.245 116.10000000000001 346.245 119.4 353.045C116.10000000000001 359.845 105.7 359.845 102.4 353.045Z" fill="none" stroke="#a8a8a8" stroke-width="1.1"/><circle cx="110.9" cy="353.045" r="3.4" fill="none" stroke="#a8a8a8" stroke-width="1.1"/><path d="M104.30000000000001 347.045L115.9 359.64500000000004" stroke="#f0f0f0" stroke-width="3"/><path d="M103.9 346.64500000000004L116.30000000000001 360.045" stroke="#a0a0a0" stroke-width="1.1"/>
<path d="M132.39999999999998 345.345H142.70000000000002M130.2 347.545V357.24500000000006M144.9 347.545V352.345M132.39999999999998 359.44500000000005H138.2" stroke="#666" stroke-width="1.2" fill="none"/><rect x="129.10" y="344.25" width="2.2" height="2.2" fill="#444"/><rect x="143.80" y="344.25" width="2.2" height="2.2" fill="#444"/><rect x="129.10" y="358.35" width="2.2" height="2.2" fill="#444"/><path d="M141.3 356.045V354.64500000000004Q141.3 352.64500000000004 143.25 352.64500000000004Q145.20000000000002 352.64500000000004 145.20000000000002 354.64500000000004V356.045" fill="none" stroke="#c9595a" stroke-width="1.3"/><rect x="139.3" y="355.845" width="7.9" height="6.1" rx=".8" fill="#c9595a"/><path d="M140.9 358.845H145.60000000000002" stroke="#e4a0a0" stroke-width=".8"/>
<path d="M102.4 379.18C105.7 372.38 116.10000000000001 372.38 119.4 379.18C116.10000000000001 385.98 105.7 385.98 102.4 379.18Z" fill="none" stroke="#a8a8a8" stroke-width="1.1"/><circle cx="110.9" cy="379.18" r="3.4" fill="none" stroke="#a8a8a8" stroke-width="1.1"/><path d="M104.30000000000001 373.18L115.9 385.78000000000003" stroke="#f0f0f0" stroke-width="3"/><path d="M103.9 372.78000000000003L116.30000000000001 386.18" stroke="#a0a0a0" stroke-width="1.1"/>
<path d="M132.39999999999998 371.48H142.70000000000002M130.2 373.68V383.38000000000005M144.9 373.68V377.88M132.39999999999998 385.58000000000004H137.39999999999998" stroke="#555" stroke-width="1.2" fill="none"/><rect x="129.10" y="370.38" width="2.2" height="2.2" fill="#3f8ae0"/><rect x="143.80" y="370.38" width="2.2" height="2.2" fill="#3f8ae0"/><rect x="129.10" y="384.48" width="2.2" height="2.2" fill="#3f8ae0"/><path d="M140.2 385.98L144.0 381.78000000000003" stroke="#f0c257" stroke-width="3.1" stroke-linecap="butt"/><path d="M143.9 381.88L145.0 380.68" stroke="#e26a62" stroke-width="3.1" stroke-linecap="round"/><path d="M138.3 387.78000000000003L139.6 384.58000000000004L141.8 386.58000000000004Z" fill="#555"/>
<path d="M102.4 405.315C105.7 398.515 116.10000000000001 398.515 119.4 405.315C116.10000000000001 412.115 105.7 412.115 102.4 405.315Z" fill="none" stroke="#a8a8a8" stroke-width="1.1"/><circle cx="110.9" cy="405.315" r="3.4" fill="none" stroke="#a8a8a8" stroke-width="1.1"/><path d="M104.30000000000001 399.315L115.9 411.915" stroke="#f0f0f0" stroke-width="3"/><path d="M103.9 398.915L116.30000000000001 412.315" stroke="#a0a0a0" stroke-width="1.1"/>
<path d="M132.39999999999998 397.615H142.70000000000002M130.2 399.815V409.51500000000004M144.9 399.815V404.015M132.39999999999998 411.71500000000003H137.39999999999998" stroke="#555" stroke-width="1.2" fill="none"/><rect x="129.10" y="396.51" width="2.2" height="2.2" fill="#3f8ae0"/><rect x="143.80" y="396.51" width="2.2" height="2.2" fill="#3f8ae0"/><rect x="129.10" y="410.62" width="2.2" height="2.2" fill="#3f8ae0"/><path d="M140.2 412.115L144.0 407.915" stroke="#f0c257" stroke-width="3.1" stroke-linecap="butt"/><path d="M143.9 408.015L145.0 406.815" stroke="#e26a62" stroke-width="3.1" stroke-linecap="round"/><path d="M138.3 413.915L139.6 410.71500000000003L141.8 412.71500000000003Z" fill="#555"/>
<path d="M102.0 431.35C105.3 424.05 116.10000000000001 424.05 119.4 431.35C116.10000000000001 438.65000000000003 105.3 438.65000000000003 102.0 431.35Z" fill="#9a9a9a"/><circle cx="110.7" cy="431.35" r="2.9" fill="none" stroke="#dadada" stroke-width="1.3"/>
<path d="M132.39999999999998 423.75H142.70000000000002M130.2 425.95V435.65000000000003M144.9 425.95V430.75M132.39999999999998 437.85H138.2" stroke="#666" stroke-width="1.2" fill="none"/><rect x="129.10" y="422.65" width="2.2" height="2.2" fill="#444"/><rect x="143.80" y="422.65" width="2.2" height="2.2" fill="#444"/><rect x="129.10" y="436.75" width="2.2" height="2.2" fill="#444"/><path d="M141.3 434.45V433.05Q141.3 431.05 143.25 431.05Q145.20000000000002 431.05 145.20000000000002 433.05V434.45" fill="none" stroke="#c9595a" stroke-width="1.3"/><rect x="139.3" y="434.25" width="7.9" height="6.1" rx=".8" fill="#c9595a"/><path d="M140.9 437.25H145.60000000000002" stroke="#e4a0a0" stroke-width=".8"/>
<path d="M102.4 457.585C105.7 450.78499999999997 116.10000000000001 450.78499999999997 119.4 457.585C116.10000000000001 464.385 105.7 464.385 102.4 457.585Z" fill="none" stroke="#a8a8a8" stroke-width="1.1"/><circle cx="110.9" cy="457.585" r="3.4" fill="none" stroke="#a8a8a8" stroke-width="1.1"/><path d="M104.30000000000001 451.585L115.9 464.185" stroke="#f0f0f0" stroke-width="3"/><path d="M103.9 451.185L116.30000000000001 464.585" stroke="#a0a0a0" stroke-width="1.1"/>
<path d="M132.39999999999998 449.885H142.70000000000002M130.2 452.085V461.785M144.9 452.085V456.28499999999997M132.39999999999998 463.985H137.39999999999998" stroke="#555" stroke-width="1.2" fill="none"/><rect x="129.10" y="448.78" width="2.2" height="2.2" fill="#3f8ae0"/><rect x="143.80" y="448.78" width="2.2" height="2.2" fill="#3f8ae0"/><rect x="129.10" y="462.88" width="2.2" height="2.2" fill="#3f8ae0"/><path d="M140.2 464.385L144.0 460.185" stroke="#f0c257" stroke-width="3.1" stroke-linecap="butt"/><path d="M143.9 460.28499999999997L145.0 459.085" stroke="#e26a62" stroke-width="3.1" stroke-linecap="round"/><path d="M138.3 466.185L139.6 462.985L141.8 464.985Z" fill="#555"/>
<path d="M102.4 483.71999999999997C105.7 476.91999999999996 116.10000000000001 476.91999999999996 119.4 483.71999999999997C116.10000000000001 490.52 105.7 490.52 102.4 483.71999999999997Z" fill="none" stroke="#a8a8a8" stroke-width="1.1"/><circle cx="110.9" cy="483.71999999999997" r="3.4" fill="none" stroke="#a8a8a8" stroke-width="1.1"/><path d="M104.30000000000001 477.71999999999997L115.9 490.32" stroke="#f0f0f0" stroke-width="3"/><path d="M103.9 477.32L116.30000000000001 490.71999999999997" stroke="#a0a0a0" stroke-width="1.1"/>
<path d="M132.39999999999998 476.02H142.70000000000002M130.2 478.21999999999997V487.92M144.9 478.21999999999997V482.41999999999996M132.39999999999998 490.12H137.39999999999998" stroke="#555" stroke-width="1.2" fill="none"/><rect x="129.10" y="474.92" width="2.2" height="2.2" fill="#3f8ae0"/><rect x="143.80" y="474.92" width="2.2" height="2.2" fill="#3f8ae0"/><rect x="129.10" y="489.02" width="2.2" height="2.2" fill="#3f8ae0"/><path d="M140.2 490.52L144.0 486.32" stroke="#f0c257" stroke-width="3.1" stroke-linecap="butt"/><path d="M143.9 486.41999999999996L145.0 485.21999999999997" stroke="#e26a62" stroke-width="3.1" stroke-linecap="round"/><path d="M138.3 492.32L139.6 489.12L141.8 491.12Z" fill="#555"/>
<path d="M102.4 509.85499999999996C105.7 503.05499999999995 116.10000000000001 503.05499999999995 119.4 509.85499999999996C116.10000000000001 516.655 105.7 516.655 102.4 509.85499999999996Z" fill="none" stroke="#a8a8a8" stroke-width="1.1"/><circle cx="110.9" cy="509.85499999999996" r="3.4" fill="none" stroke="#a8a8a8" stroke-width="1.1"/><path d="M104.30000000000001 503.85499999999996L115.9 516.4549999999999" stroke="#f0f0f0" stroke-width="3"/><path d="M103.9 503.455L116.30000000000001 516.855" stroke="#a0a0a0" stroke-width="1.1"/>
<path d="M132.39999999999998 502.155H142.70000000000002M130.2 504.35499999999996V514.055M144.9 504.35499999999996V508.55499999999995M132.39999999999998 516.255H137.39999999999998" stroke="#555" stroke-width="1.2" fill="none"/><rect x="129.10" y="501.05" width="2.2" height="2.2" fill="#3f8ae0"/><rect x="143.80" y="501.05" width="2.2" height="2.2" fill="#3f8ae0"/><rect x="129.10" y="515.15" width="2.2" height="2.2" fill="#3f8ae0"/><path d="M140.2 516.655L144.0 512.4549999999999" stroke="#f0c257" stroke-width="3.1" stroke-linecap="butt"/><path d="M143.9 512.555L145.0 511.35499999999996" stroke="#e26a62" stroke-width="3.1" stroke-linecap="round"/><path d="M138.3 518.4549999999999L139.6 515.255L141.8 517.255Z" fill="#555"/>
<path d="M102.4 535.9900000000001C105.7 529.1900000000002 116.10000000000001 529.1900000000002 119.4 535.9900000000001C116.10000000000001 542.7900000000001 105.7 542.7900000000001 102.4 535.9900000000001Z" fill="none" stroke="#a8a8a8" stroke-width="1.1"/><circle cx="110.9" cy="535.9900000000001" r="3.4" fill="none" stroke="#a8a8a8" stroke-width="1.1"/><path d="M104.30000000000001 529.9900000000001L115.9 542.5900000000001" stroke="#f0f0f0" stroke-width="3"/><path d="M103.9 529.5900000000001L116.30000000000001 542.9900000000001" stroke="#a0a0a0" stroke-width="1.1"/>
<path d="M132.39999999999998 528.2900000000001H142.70000000000002M130.2 530.4900000000001V540.19M144.9 530.4900000000001V534.69M132.39999999999998 542.3900000000001H137.39999999999998" stroke="#555" stroke-width="1.2" fill="none"/><rect x="129.10" y="527.19" width="2.2" height="2.2" fill="#3f8ae0"/><rect x="143.80" y="527.19" width="2.2" height="2.2" fill="#3f8ae0"/><rect x="129.10" y="541.29" width="2.2" height="2.2" fill="#3f8ae0"/><path d="M140.2 542.7900000000001L144.0 538.59" stroke="#f0c257" stroke-width="3.1" stroke-linecap="butt"/><path d="M143.9 538.69L145.0 537.4900000000001" stroke="#e26a62" stroke-width="3.1" stroke-linecap="round"/><path d="M138.3 544.59L139.6 541.3900000000001L141.8 543.3900000000001Z" fill="#555"/>
<path d="M102.4 562.1250000000001C105.7 555.3250000000002 116.10000000000001 555.3250000000002 119.4 562.1250000000001C116.10000000000001 568.9250000000001 105.7 568.9250000000001 102.4 562.1250000000001Z" fill="none" stroke="#a8a8a8" stroke-width="1.1"/><circle cx="110.9" cy="562.1250000000001" r="3.4" fill="none" stroke="#a8a8a8" stroke-width="1.1"/><path d="M104.30000000000001 556.1250000000001L115.9 568.7250000000001" stroke="#f0f0f0" stroke-width="3"/><path d="M103.9 555.7250000000001L116.30000000000001 569.1250000000001" stroke="#a0a0a0" stroke-width="1.1"/>
<path d="M132.39999999999998 554.4250000000001H142.70000000000002M130.2 556.6250000000001V566.325M144.9 556.6250000000001V560.825M132.39999999999998 568.5250000000001H137.39999999999998" stroke="#555" stroke-width="1.2" fill="none"/><rect x="129.10" y="553.33" width="2.2" height="2.2" fill="#3f8ae0"/><rect x="143.80" y="553.33" width="2.2" height="2.2" fill="#3f8ae0"/><rect x="129.10" y="567.43" width="2.2" height="2.2" fill="#3f8ae0"/><path d="M140.2 568.9250000000001L144.0 564.725" stroke="#f0c257" stroke-width="3.1" stroke-linecap="butt"/><path d="M143.9 564.825L145.0 563.6250000000001" stroke="#e26a62" stroke-width="3.1" stroke-linecap="round"/><path d="M138.3 570.725L139.6 567.5250000000001L141.8 569.5250000000001Z" fill="#555"/>
<path d="M102.4 588.2600000000001C105.7 581.4600000000002 116.10000000000001 581.4600000000002 119.4 588.2600000000001C116.10000000000001 595.0600000000001 105.7 595.0600000000001 102.4 588.2600000000001Z" fill="none" stroke="#a8a8a8" stroke-width="1.1"/><circle cx="110.9" cy="588.2600000000001" r="3.4" fill="none" stroke="#a8a8a8" stroke-width="1.1"/><path d="M104.30000000000001 582.2600000000001L115.9 594.8600000000001" stroke="#f0f0f0" stroke-width="3"/><path d="M103.9 581.8600000000001L116.30000000000001 595.2600000000001" stroke="#a0a0a0" stroke-width="1.1"/>
<path d="M132.39999999999998 580.5600000000001H142.70000000000002M130.2 582.7600000000001V592.46M144.9 582.7600000000001V586.96M132.39999999999998 594.6600000000001H137.39999999999998" stroke="#555" stroke-width="1.2" fill="none"/><rect x="129.10" y="579.46" width="2.2" height="2.2" fill="#3f8ae0"/><rect x="143.80" y="579.46" width="2.2" height="2.2" fill="#3f8ae0"/><rect x="129.10" y="593.56" width="2.2" height="2.2" fill="#3f8ae0"/><path d="M140.2 595.0600000000001L144.0 590.86" stroke="#f0c257" stroke-width="3.1" stroke-linecap="butt"/><path d="M143.9 590.96L145.0 589.7600000000001" stroke="#e26a62" stroke-width="3.1" stroke-linecap="round"/><path d="M138.3 596.86L139.6 593.6600000000001L141.8 595.6600000000001Z" fill="#555"/>
<path d="M102.4 614.3950000000001C105.7 607.5950000000001 116.10000000000001 607.5950000000001 119.4 614.3950000000001C116.10000000000001 621.195 105.7 621.195 102.4 614.3950000000001Z" fill="none" stroke="#a8a8a8" stroke-width="1.1"/><circle cx="110.9" cy="614.3950000000001" r="3.4" fill="none" stroke="#a8a8a8" stroke-width="1.1"/><path d="M104.30000000000001 608.3950000000001L115.9 620.9950000000001" stroke="#f0f0f0" stroke-width="3"/><path d="M103.9 607.9950000000001L116.30000000000001 621.3950000000001" stroke="#a0a0a0" stroke-width="1.1"/>
<path d="M132.39999999999998 606.695H142.70000000000002M130.2 608.8950000000001V618.595M144.9 608.8950000000001V613.095M132.39999999999998 620.7950000000001H137.39999999999998" stroke="#555" stroke-width="1.2" fill="none"/><rect x="129.10" y="605.60" width="2.2" height="2.2" fill="#3f8ae0"/><rect x="143.80" y="605.60" width="2.2" height="2.2" fill="#3f8ae0"/><rect x="129.10" y="619.70" width="2.2" height="2.2" fill="#3f8ae0"/><path d="M140.2 621.195L144.0 616.995" stroke="#f0c257" stroke-width="3.1" stroke-linecap="butt"/><path d="M143.9 617.095L145.0 615.8950000000001" stroke="#e26a62" stroke-width="3.1" stroke-linecap="round"/><path d="M138.3 622.995L139.6 619.7950000000001L141.8 621.7950000000001Z" fill="#555"/>
<path d="M102.4 640.5300000000001C105.7 633.7300000000001 116.10000000000001 633.7300000000001 119.4 640.5300000000001C116.10000000000001 647.33 105.7 647.33 102.4 640.5300000000001Z" fill="none" stroke="#a8a8a8" stroke-width="1.1"/><circle cx="110.9" cy="640.5300000000001" r="3.4" fill="none" stroke="#a8a8a8" stroke-width="1.1"/><path d="M104.30000000000001 634.5300000000001L115.9 647.1300000000001" stroke="#f0f0f0" stroke-width="3"/><path d="M103.9 634.1300000000001L116.30000000000001 647.5300000000001" stroke="#a0a0a0" stroke-width="1.1"/>
<path d="M132.39999999999998 632.83H142.70000000000002M130.2 635.0300000000001V644.73M144.9 635.0300000000001V639.23M132.39999999999998 646.9300000000001H137.39999999999998" stroke="#555" stroke-width="1.2" fill="none"/><rect x="129.10" y="631.73" width="2.2" height="2.2" fill="#3f8ae0"/><rect x="143.80" y="631.73" width="2.2" height="2.2" fill="#3f8ae0"/><rect x="129.10" y="645.83" width="2.2" height="2.2" fill="#3f8ae0"/><path d="M140.2 647.33L144.0 643.13" stroke="#f0c257" stroke-width="3.1" stroke-linecap="butt"/><path d="M143.9 643.23L145.0 642.0300000000001" stroke="#e26a62" stroke-width="3.1" stroke-linecap="round"/><path d="M138.3 649.13L139.6 645.9300000000001L141.8 647.9300000000001Z" fill="#555"/>
<path d="M102.4 666.6650000000001C105.7 659.8650000000001 116.10000000000001 659.8650000000001 119.4 666.6650000000001C116.10000000000001 673.465 105.7 673.465 102.4 666.6650000000001Z" fill="none" stroke="#a8a8a8" stroke-width="1.1"/><circle cx="110.9" cy="666.6650000000001" r="3.4" fill="none" stroke="#a8a8a8" stroke-width="1.1"/><path d="M104.30000000000001 660.6650000000001L115.9 673.2650000000001" stroke="#f0f0f0" stroke-width="3"/><path d="M103.9 660.2650000000001L116.30000000000001 673.6650000000001" stroke="#a0a0a0" stroke-width="1.1"/>
<path d="M132.39999999999998 658.965H142.70000000000002M130.2 661.1650000000001V670.865M144.9 661.1650000000001V665.365M132.39999999999998 673.065H137.39999999999998" stroke="#555" stroke-width="1.2" fill="none"/><rect x="129.10" y="657.87" width="2.2" height="2.2" fill="#3f8ae0"/><rect x="143.80" y="657.87" width="2.2" height="2.2" fill="#3f8ae0"/><rect x="129.10" y="671.97" width="2.2" height="2.2" fill="#3f8ae0"/><path d="M140.2 673.465L144.0 669.265" stroke="#f0c257" stroke-width="3.1" stroke-linecap="butt"/><path d="M143.9 669.365L145.0 668.1650000000001" stroke="#e26a62" stroke-width="3.1" stroke-linecap="round"/><path d="M138.3 675.265L139.6 672.065L141.8 674.065Z" fill="#555"/>
<path d="M10.6 137.2V144L5.4 140.6ZM16.4 137.2V144L11.2 140.6Z" fill="#444"/>
<circle cx="308.2" cy="140" r="5" fill="#333"/><path d="M305.7 140H310.7" stroke="#b0b0b0" stroke-width="1.6"/>
<path d="M321.5 134.1V145.9" stroke="#555" stroke-width="1"/><path d="M323.5 136.1V143.7" stroke="#888" stroke-width="1"/>
<circle cx="308.3" cy="704.5" r="4.9" fill="#2a2a2a"/><path d="M305.6 704.5H311M308.3 701.8V707.2" stroke="#f0f0f0" stroke-width="1.4"/>
<path d="M321.5 698.6V710.7" stroke="#555" stroke-width="1"/><path d="M323.5 701V708.1" stroke="#888" stroke-width="1"/>
</svg>


<div class="t" id="t_top" style="left:1417.5px;top:169.7px;font-size:12.8px;color:#8a8a90;-webkit-text-stroke:.3px #8a8a90;transform:scaleX(0.7209);transform-origin:0 0">TOP</div>
<div class="t" id="t_y" style="left:1405.7px;top:140.7px;font-size:13.4px;color:#a4e084;-webkit-text-stroke:.3px #a4e084;transform:scaleX(0.6713);transform-origin:0 0">Y</div>
<div class="t" id="t_z" style="left:1398.6px;top:195.2px;font-size:11.3px;color:#8484f2;font-style:italic;-webkit-text-stroke:.4px #8484f2">Z</div>
<div class="t" id="t_x" style="left:1452.8px;top:188.2px;font-size:12.4px;color:#f0a0a0;-webkit-text-stroke:.3px #f0a0a0;transform:scaleX(0.7501);transform-origin:0 0">X</div>
<!-- NAVBAR -->
<div class="abs" style="left:609.3px;top:692.2px;width:257.7px;height:22px;background:#f0f0f0"></div>
<svg class="abs" style="left:600px;top:686px" width="280" height="28" viewBox="600 686 280 28">
<defs>
<linearGradient id="gGrid" x1="0" y1="0" x2="0" y2="1"><stop offset="0" stop-color="#7a7a7a"/><stop offset="1" stop-color="#4c4c4c"/></linearGradient>
<radialGradient id="gLens" cx=".4" cy=".35" r=".7"><stop offset="0" stop-color="#fff"/><stop offset="1" stop-color="#c8d4d8"/></radialGradient>
</defs>
<g fill="#333">
<path d="M635.4 703.1H641.6L638.5 706.6Z"/><path d="M756 703.1H762.7L759.35 706.9Z"/><path d="M788.6 703.1H795.2L791.9 706.9Z"/><path d="M822.2 703.1H828.8L825.5 706.9Z"/><path d="M856.3 703.1H862.9L859.6 706.9Z"/>
</g>
<!-- orbit -->
<path d="M621.6 698V716" stroke="#333" stroke-width="2.4"/><path d="M621.6 699V716" stroke="#fff" stroke-width=".9"/>
<path d="M621.6 695.6L624.8 700H618.4Z" fill="#fff" stroke="#333" stroke-width=".9" stroke-linejoin="round"/>
<path d="M619.4 704.2Q613.2 705 613.4 707.6Q613.8 710.4 619 710.8M624 704.2Q629.4 705 629 707.6Q628.4 710.2 624 710.8" fill="none" stroke="#333" stroke-width="1.4"/>
<path d="M615 710.4L619.6 708V713.2Z" fill="#333"/>
<!-- look at -->
<path d="M649.4 702L654.4 697.2L655.6 700.2L660 697.6L662.2 698.4V702Z" fill="#b8b8b8" stroke="#555" stroke-width=".9" stroke-linejoin="round"/>
<rect x="649.2" y="702.4" width="16.2" height="12" fill="#f4f4f4" stroke="#555" stroke-width="1.6"/>
<rect x="652.6" y="705.4" width="9.4" height="5.6" fill="#a4a4ac" stroke="#555" stroke-width=".9"/>
<!-- hand -->
<path d="M681.4 714Q680.6 710.6 677.8 706.6Q677.4 705.2 678.6 705Q680 705 681.8 708V699.4Q681.8 697.8 683 697.8Q684.2 697.8 684.2 699.4V697.6Q684.2 696.2 685.4 696.2Q686.6 696.2 686.6 697.6V698Q686.6 696.8 687.8 696.8Q689 696.8 689 698V700Q689 698.8 690.2 698.8Q691.4 698.8 691.4 700.2Q693 703 692.4 707Q692 710.6 691.4 714Z" fill="#f8f8f8" stroke="#444" stroke-width="1" stroke-linejoin="round"/>
<path d="M684.2 699.4V704M686.6 698V704M689 700V704.4" stroke="#444" stroke-width=".9"/>
<!-- zoom -->
<path d="M713.4 707.6L718.2 712.2" stroke="#333" stroke-width="2.6" stroke-linecap="round"/>
<circle cx="709.9" cy="703.9" r="4.6" fill="url(#gLens)" stroke="#444" stroke-width="1.4"/>
<path d="M717.2 699.6H723M720.1 696.7V702.5M717.2 704.3H723" stroke="#333" stroke-width="1.2"/>
<!-- zoom window -->
<path d="M733.2 696.4H750.4V714H733.2Z" fill="none" stroke="#444" stroke-width="1" stroke-dasharray="1.2 1.8"/>
<path d="M745.2 708.6L750.6 713.6" stroke="#333" stroke-width="3" stroke-linecap="round"/>
<circle cx="740.2" cy="703.4" r="6.6" fill="url(#gLens)" stroke="#444" stroke-width="1.5"/>
<!-- display -->
<rect x="775" y="710.6" width="6" height="2.4" fill="#888"/><rect x="773" y="712.6" width="10" height="1.4" fill="#aaa"/>
<rect x="769.2" y="696.4" width="17.2" height="14.4" rx="1.6" fill="#909090"/>
<rect x="771.2" y="698.6" width="13.2" height="10" fill="#a8bce8" stroke="#445494" stroke-width=".9"/>
<!-- grid -->
<rect x="803.2" y="696.2" width="16.9" height="18" rx="1" fill="url(#gGrid)"/>
<g fill="#fff"><circle cx="805.6" cy="698.8" r="1.05"/><circle cx="808.6" cy="698.8" r="1.05"/><circle cx="811.65" cy="698.8" r="1.05"/><circle cx="814.7" cy="698.8" r="1.05"/><circle cx="817.7" cy="698.8" r="1.05"/>
<circle cx="805.6" cy="701.9" r="1.05"/><circle cx="808.6" cy="701.9" r="1.05"/><circle cx="811.65" cy="701.9" r="1.05"/><circle cx="814.7" cy="701.9" r="1.05"/><circle cx="817.7" cy="701.9" r="1.05"/></g>
<g fill="#e0e0e0"><circle cx="805.6" cy="705" r="1"/><circle cx="808.6" cy="705" r="1"/><circle cx="811.65" cy="705" r="1"/><circle cx="814.7" cy="705" r="1"/><circle cx="817.7" cy="705" r="1"/></g>
<g fill="#bdbdbd"><circle cx="805.6" cy="708.1" r="1"/><circle cx="808.6" cy="708.1" r="1"/><circle cx="811.65" cy="708.1" r="1"/><circle cx="814.7" cy="708.1" r="1"/><circle cx="817.7" cy="708.1" r="1"/></g>
<g fill="#a0a0a0"><circle cx="805.6" cy="711.2" r="1"/><circle cx="808.6" cy="711.2" r="1"/><circle cx="811.65" cy="711.2" r="1"/><circle cx="814.7" cy="711.2" r="1"/><circle cx="817.7" cy="711.2" r="1"/></g>
<!-- viewports -->
<g fill="#9eb0e0" stroke="#445494" stroke-width="1.1"><rect x="837" y="697.8" width="7.2" height="6.2" rx=".8"/><rect x="845.4" y="697.8" width="7.2" height="6.2" rx=".8"/><rect x="837" y="705" width="7.2" height="6.2" rx=".8"/><rect x="845.4" y="705" width="7.2" height="6.2" rx=".8"/></g>
</svg>

</body>
</html>
